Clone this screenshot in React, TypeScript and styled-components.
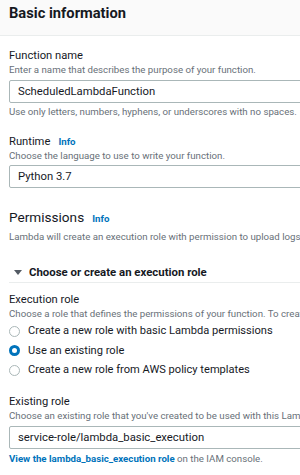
import React from "react";
import styled, { createGlobalStyle } from "styled-components";

const Global = createGlobalStyle`
  html, body { margin: 0; padding: 0; background: #fff; overflow: hidden; }
  body { font-family: Roboto, "Liberation Sans", Arial, sans-serif; color: #16191f; }
`;

const Page = styled.div`
  width: 300px;
  height: 475px;
  overflow: hidden;
  background: #fff;
`;

const Header = styled.div`
  height: 36px;
  box-sizing: border-box;
  background: #fafafa;
  border-bottom: 1px solid #eaeded;
  padding: 4px 9px 0;
`;

const HeaderTitle = styled.h2`
  margin: 0;
  font-size: 14.7px;
  font-weight: 700;
  line-height: 18px;
  color: #16191f;
`;

const Body = styled.div`
  padding: 13px 0 0 9px;
  display: flex;
  flex-direction: column;
`;

const Field = styled.div<{ $mt?: number }>`
  display: flex;
  flex-direction: column;
  margin-top: ${(p) => p.$mt ?? 0}px;
`;

const Label = styled.div`
  font-size: 11.2px;
  line-height: 14px;
  height: 14px;
  display: flex;
  align-items: baseline;
  gap: 8px;
  white-space: nowrap;
`;

const Info = styled.a`
  font-size: 9.7px;
  font-weight: 700;
  color: #0073bb;
  text-decoration: none;
`;

const Desc = styled.div<{ $mt?: number }>`
  margin-top: ${(p) => p.$mt ?? 0}px;
  font-size: 9.7px;
  line-height: 13px;
  height: 13px;
  color: #687078;
  white-space: nowrap;
  overflow: hidden;
`;

const Input = styled.div<{ $mt?: number }>`
  margin-top: ${(p) => p.$mt ?? 4}px;
  margin-right: -20px;
  height: 23px;
  box-sizing: border-box;
  border: 1px solid #aab7b8;
  border-radius: 2px;
  padding: 0 8px;
  font-size: 11.3px;
  color: #16191f;
  display: flex;
  align-items: center;
  white-space: nowrap;
`;

const SectionTitle = styled.div`
  font-size: 13.6px;
  line-height: 18px;
  height: 18px;
  display: flex;
  align-items: baseline;
  gap: 8px;
  white-space: nowrap;
`;

const Expander = styled.div`
  margin-top: 22px;
  padding: 0 0 3px 5px;
  border-bottom: 1px solid #eaeded;
  display: flex;
  align-items: center;
  gap: 7px;
  height: 14px;
  font-size: 11.4px;
  line-height: 14px;
  font-weight: 700;
  color: #16191f;
  white-space: nowrap;
`;

const Caret = styled.span`
  width: 0;
  height: 0;
  border-left: 4px solid transparent;
  border-right: 4px solid transparent;
  border-top: 5px solid #545b64;
`;

const RadioList = styled.div`
  display: flex;
  flex-direction: column;
  margin-top: 1.5px;
`;

const RadioRow = styled.label`
  display: flex;
  align-items: center;
  gap: 8px;
  font-size: 11.1px;
  line-height: 14px;
  height: 19.5px;
  white-space: nowrap;
  color: #16191f;
`;

const RadioDot = styled.span<{ $checked?: boolean }>`
  width: 11px;
  height: 11px;
  box-sizing: border-box;
  border-radius: 50%;
  border: ${(p) => (p.$checked ? "3.5px solid #0073bb" : "1px solid #aab7b8")};
  background: #fff;
  flex: none;
`;

const LinkLine = styled.div`
  margin-top: 3px;
  font-size: 9.7px;
  line-height: 13px;
  color: #687078;
  white-space: nowrap;
`;

const StrongLink = styled.a`
  color: #0073bb;
  font-weight: 700;
  text-decoration: none;
`;

export default function App() {
  return (
    <Page>
      <Global />
      <Header>
        <HeaderTitle>Basic information</HeaderTitle>
      </Header>
      <Body>
        <Field>
          <Label>Function name</Label>
          <Desc>Enter a name that describes the purpose of your function.</Desc>
          <Input>ScheduledLambdaFunction</Input>
          <Desc $mt={2}>Use only letters, numbers, hyphens, or underscores with no spaces.</Desc>
        </Field>
        <Field $mt={17}>
          <Label>
            Runtime <Info>Info</Info>
          </Label>
          <Desc>Choose the language to use to write your function.</Desc>
          <Input $mt={3}>Python 3.7</Input>
        </Field>
        <Field $mt={20}>
          <SectionTitle>
            Permissions <Info>Info</Info>
          </SectionTitle>
          <Desc $mt={4}>
            Lambda will create an execution role with permission to upload logs to Amazon CloudWatch Logs.
          </Desc>
        </Field>
        <Expander>
          <Caret />
          Choose or create an execution role
        </Expander>
        <Field $mt={10}>
          <Label>Execution role</Label>
          <Desc>Choose a role that defines the permissions of your function. To create a custom role, go to the IAM console.</Desc>
          <RadioList>
            <RadioRow>
              <RadioDot />
              Create a new role with basic Lambda permissions
            </RadioRow>
            <RadioRow>
              <RadioDot $checked />
              Use an existing role
            </RadioRow>
            <RadioRow>
              <RadioDot />
              Create a new role from AWS policy templates
            </RadioRow>
          </RadioList>
        </Field>
        <Field $mt={15}>
          <Label>Existing role</Label>
          <Desc>Choose an existing role that you've created to be used with this Lambda function.</Desc>
          <Input $mt={3.5}>service-role/lambda_basic_execution</Input>
          <LinkLine>
            <StrongLink>View the lambda_basic_execution role</StrongLink> on the IAM console.
          </LinkLine>
        </Field>
      </Body>
    </Page>
  );
}
